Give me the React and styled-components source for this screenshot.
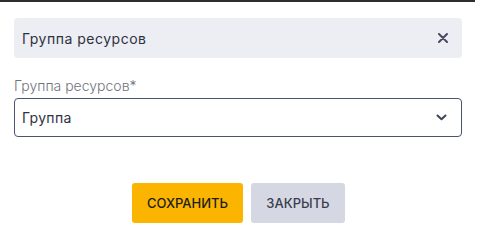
import React from "react";
import styled, { createGlobalStyle } from "styled-components";

const Global = createGlobalStyle`
	html, body {
		margin: 0;
		padding: 0;
		background: #ffffff;
	}
	body {
		font-family: Inter, "Noto Sans", sans-serif;
		width: 477px;
		height: 244px;
		overflow: hidden;
	}
`;

const Backdrop = styled.div`
	height: 2px;
	width: 475px;
	background: #2e2e2e;
`;

const Modal = styled.div`
	padding: 16px 15px 0 14px;
	display: flex;
	flex-direction: column;
`;

const Header = styled.div`
	height: 40px;
	background: #eceef3;
	border-radius: 4px;
	display: flex;
	align-items: center;
	justify-content: space-between;
	padding: 0 14px 0 8px;
	font-size: 14px;
	letter-spacing: 0.5px;
	color: #2f3142;
`;

const CloseButton = styled.button`
	border: none;
	background: none;
	padding: 0;
	display: flex;
	cursor: pointer;
	color: #474b62;
`;

const Field = styled.div`
	margin-top: 20px;
	display: flex;
	flex-direction: column;
	gap: 4px;
`;

const Label = styled.label`
	font-size: 14px;
	font-weight: 300;
	color: #6f717c;
	line-height: 16px;
`;

const Select = styled.div`
	height: 37px;
	border: 1px solid #4b5272;
	border-radius: 4px;
	display: flex;
	align-items: center;
	justify-content: space-between;
	padding: 0 14px 0 7px;
	font-size: 14px;
	letter-spacing: 0.3px;
	color: #2f3142;
`;

const Actions = styled.div`
	margin-top: 46px;
	display: flex;
	justify-content: center;
	gap: 8px;
	padding-left: 1px;
`;

const Button = styled.button`
	height: 40px;
	width: ${(p) => p.$w}px;
	border: none;
	border-radius: 3px;
	font-family: inherit;
	font-size: 13px;
	font-weight: 500;
	text-transform: uppercase;
	background: ${(p) => (p.$primary ? "#fbb500" : "#d5d8e3")};
	color: ${(p) => (p.$primary ? "#1c1c1c" : "#3a3d4e")};
	cursor: pointer;
`;

export default function App() {
	return (
		<>
			<Global />
			<Backdrop />
			<Modal>
				<Header>
					<span>Группа ресурсов</span>
					<CloseButton aria-label="close">
						<svg width="10" height="10" viewBox="0 0 10 10">
							<path d="M1 1 L9 9 M9 1 L1 9" stroke="currentColor" strokeWidth="2" strokeLinecap="round" />
						</svg>
					</CloseButton>
				</Header>
				<Field>
					<Label>Группа ресурсов*</Label>
					<Select>
						<span>Группа</span>
						<svg width="11" height="7" viewBox="0 0 11 7">
							<path d="M1.5 1.5 L5.5 5.2 L9.5 1.5" fill="none" stroke="#3f4358" strokeWidth="2" strokeLinecap="round" strokeLinejoin="round" />
						</svg>
					</Select>
				</Field>
				<Actions>
					<Button $primary $w={111}>Сохранить</Button>
					<Button $w={94}>Закрыть</Button>
				</Actions>
			</Modal>
		</>
	);
}
